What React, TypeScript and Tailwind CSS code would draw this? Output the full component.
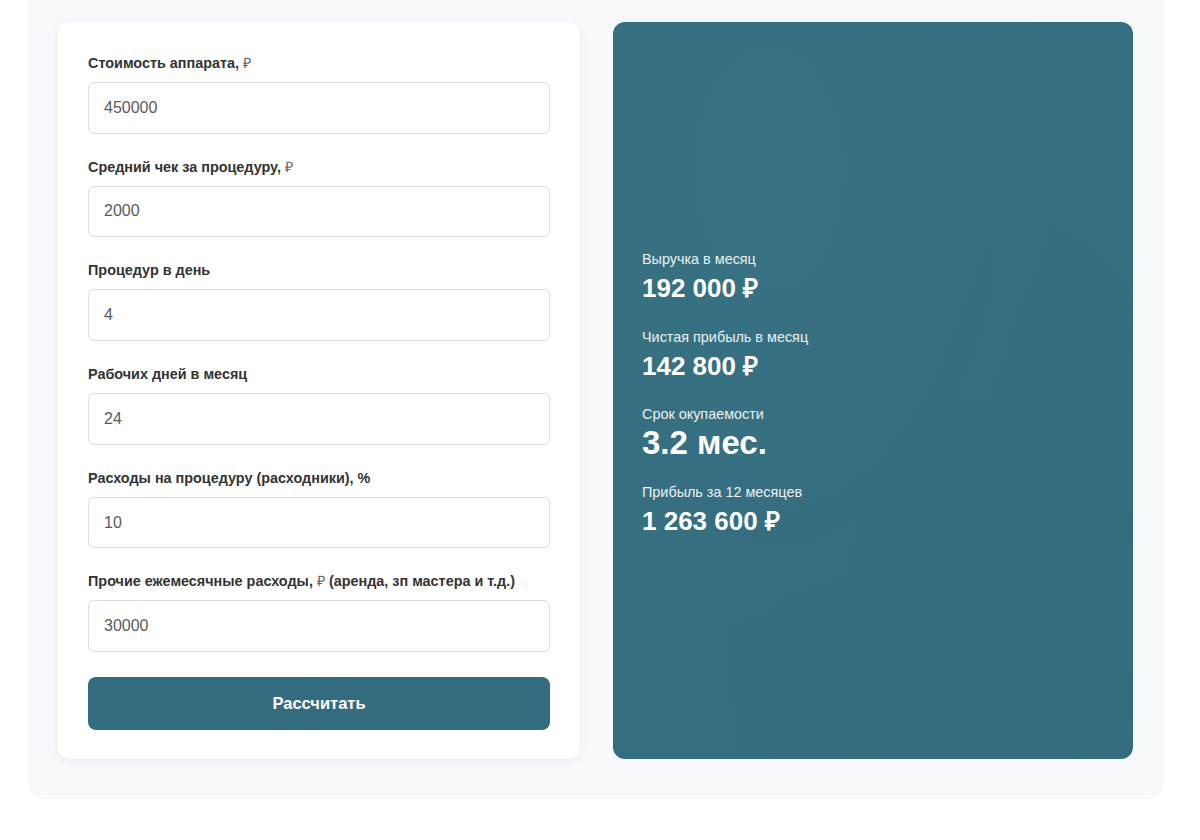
import React, { useState } from "react";

type Field = {
  key: string;
  label: React.ReactNode;
  value: string;
};

const initialFields: Field[] = [
  { key: "price", label: <>Стоимость аппарата, <span className="font-normal text-[#666]">₽</span></>, value: "450000" },
  { key: "check", label: <>Средний чек за процедуру, <span className="font-normal text-[#666]">₽</span></>, value: "2000" },
  { key: "perDay", label: "Процедур в день", value: "4" },
  { key: "days", label: "Рабочих дней в месяц", value: "24" },
  { key: "consumables", label: "Расходы на процедуру (расходники), %", value: "10" },
  {
    key: "other",
    label: <>Прочие ежемесячные расходы, <span className="font-normal text-[#666]">₽</span> (аренда, зп мастера и т.д.)</>,
    value: "30000",
  },
];

const results = [
  { label: "Выручка в месяц", value: "192 000 ₽", big: false },
  { label: "Чистая прибыль в месяц", value: "142 800 ₽", big: false },
  { label: "Срок окупаемости", value: "3.2 мес.", big: true },
  { label: "Прибыль за 12 месяцев", value: "1 263 600 ₽", big: false },
];

export default function App() {
  const [values, setValues] = useState<Record<string, string>>(
    Object.fromEntries(initialFields.map((f) => [f.key, f.value]))
  );

  return (
    <div className="min-h-[840px] bg-white font-['Liberation_Sans',Arial,sans-serif]">
      <div className="mx-[28px] w-[1136px] rounded-b-[16px] bg-[#f8f9fc] px-[30px] pb-[40px] pt-[22px]">
        <div className="flex gap-[33px]">
          {/* form card */}
          <div className="w-[522px] rounded-[12px] bg-white px-[30px] pb-[29px] pt-[31px] shadow-[0_2px_10px_rgba(30,40,80,0.06)]">
            {initialFields.map((f) => (
              <div key={f.key} className="mb-[23.2px]">
                <label className="mb-[9px] block text-[14.4px] font-bold leading-[20px] text-[#333333]">
                  {f.label}
                </label>
                <input
                  value={values[f.key]}
                  onChange={(e) => setValues({ ...values, [f.key]: e.target.value })}
                  className="h-[51.5px] w-full rounded-[6px] border border-[#dcdcdc] bg-white px-[15px] text-[16px] text-[#5a5a5a] outline-none"
                />
              </div>
            ))}
            <button className="mt-[2px] h-[53px] w-full rounded-[8px] bg-[#336c7e] text-[16.5px] font-bold text-white">
              Рассчитать
            </button>
          </div>

          {/* results panel */}
          <div className="flex w-[520px] flex-col justify-center rounded-[12px] bg-[#346e80] bg-[radial-gradient(ellipse_at_30%_20%,rgba(255,255,255,0.025),transparent_60%),radial-gradient(ellipse_at_70%_80%,rgba(0,0,0,0.025),transparent_60%)] px-[29px] pt-[9px] text-white">
            {results.map((r, i) => (
              <div key={r.label} className={i < results.length - 1 ? "mb-[22.5px]" : ""}>
                <div className="text-[14.4px] leading-[17px] text-white/90">{r.label}</div>
                <div
                  className={
                    "mt-[2px] font-bold leading-[36px] " + (r.big ? "text-[33px]" : "text-[26px]")
                  }
                >
                  {r.value}
                </div>
              </div>
            ))}
          </div>
        </div>
      </div>
    </div>
  );
}
